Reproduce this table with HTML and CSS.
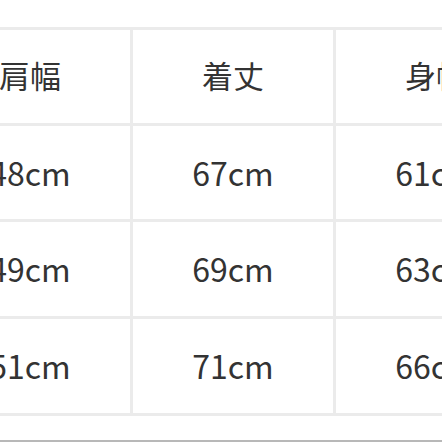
FILE: index.html
```html
<!DOCTYPE html>
<html lang="ja">
<head>
<meta charset="utf-8">
<link rel="stylesheet" href="styles.css">
</head>
<body>
<div class="page">
  <div class="table">
    <div class="cell head">肩幅</div><div class="cell head">着丈</div><div class="cell head">身幅</div>
    <div class="cell">48cm</div><div class="cell">67cm</div><div class="cell">61cm</div>
    <div class="cell">49cm</div><div class="cell">69cm</div><div class="cell">63cm</div>
    <div class="cell">51cm</div><div class="cell">71cm</div><div class="cell">66cm</div>
  </div>
  <div class="bottom-line"></div>
</div>
</body>
</html>
```
FILE: styles.css
```css
html, body {
  margin: 0;
  padding: 0;
  background: #ffffff;
}
body {
  width: 442px;
  height: 442px;
  overflow: hidden;
  font-family: "Noto Sans CJK JP", "Noto Sans", sans-serif;
  color: #333333;
}
.page {
  position: relative;
  width: 442px;
  height: 442px;
  padding-top: 27px;
  box-sizing: border-box;
}
.table {
  display: grid;
  grid-template-columns: 200px 200px 200px;
  grid-template-rows: 93px 93px 94px 94px;
  gap: 3px;
  padding: 3px;
  background: #ebebeb;
  width: max-content;
  margin-left: -73px;
}
.cell {
  background: #ffffff;
  display: flex;
  align-items: center;
  justify-content: center;
  font-size: 32px;
  line-height: 1;
  white-space: nowrap;
  padding-bottom: 2px;
  box-sizing: border-box;
}
.cell.head {
  font-size: 31px;
  padding-bottom: 4px;
}
.bottom-line {
  position: absolute;
  left: 0;
  right: 0;
  bottom: 0;
  height: 2px;
  background: #b8b8b8;
}
```
